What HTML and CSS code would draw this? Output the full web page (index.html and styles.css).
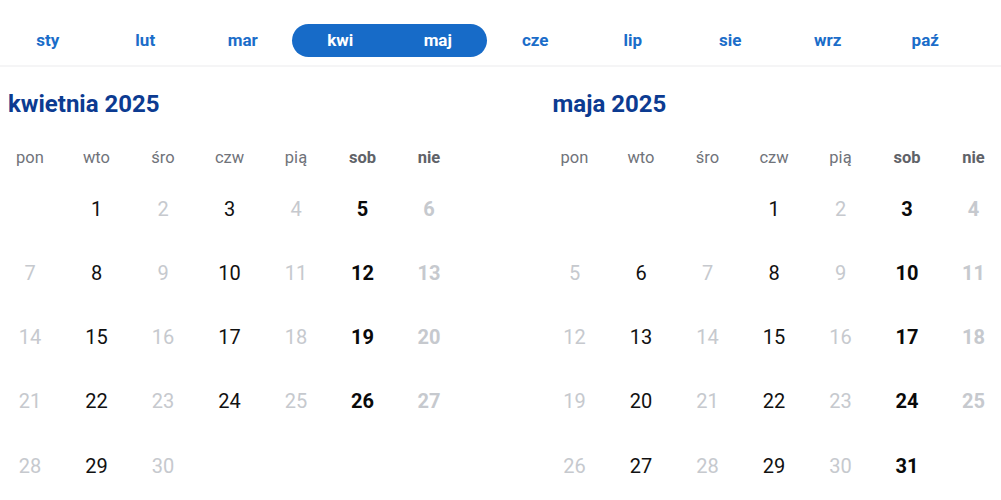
FILE: index.html
```html
<!DOCTYPE html>
<html lang="pl">
<head>
<meta charset="utf-8">
<title>Kalendarz</title>
<link rel="stylesheet" href="styles.css">
</head>
<body>
<nav class="months">
  <div class="month">sty</div>
  <div class="month">lut</div>
  <div class="month">mar</div>
  <div class="range">
    <div class="month sel">kwi</div>
    <div class="month sel">maj</div>
  </div>
  <div class="month">cze</div>
  <div class="month">lip</div>
  <div class="month">sie</div>
  <div class="month">wrz</div>
  <div class="month">paź</div>
</nav>
<main class="calendars">
  <section class="cal">
    <h2 class="title">kwietnia 2025</h2>
    <div class="grid">
      <div class="wd">pon</div><div class="wd">wto</div><div class="wd">śro</div><div class="wd">czw</div><div class="wd">pią</div><div class="wd we">sob</div><div class="wd we">nie</div>
      <div class="day"></div><div class="day d">1</div><div class="day m">2</div><div class="day d">3</div><div class="day m">4</div><div class="day s">5</div><div class="day u">6</div>
      <div class="day m">7</div><div class="day d">8</div><div class="day m">9</div><div class="day d">10</div><div class="day m">11</div><div class="day s">12</div><div class="day u">13</div>
      <div class="day m">14</div><div class="day d">15</div><div class="day m">16</div><div class="day d">17</div><div class="day m">18</div><div class="day s">19</div><div class="day u">20</div>
      <div class="day m">21</div><div class="day d">22</div><div class="day m">23</div><div class="day d">24</div><div class="day m">25</div><div class="day s">26</div><div class="day u">27</div>
      <div class="day m">28</div><div class="day d">29</div><div class="day m">30</div><div class="day"></div><div class="day"></div><div class="day"></div><div class="day"></div>
    </div>
  </section>
  <section class="cal">
    <h2 class="title">maja 2025</h2>
    <div class="grid">
      <div class="wd">pon</div><div class="wd">wto</div><div class="wd">śro</div><div class="wd">czw</div><div class="wd">pią</div><div class="wd we">sob</div><div class="wd we">nie</div>
      <div class="day"></div><div class="day"></div><div class="day"></div><div class="day d">1</div><div class="day m">2</div><div class="day s">3</div><div class="day u">4</div>
      <div class="day m">5</div><div class="day d">6</div><div class="day m">7</div><div class="day d">8</div><div class="day m">9</div><div class="day s">10</div><div class="day u">11</div>
      <div class="day m">12</div><div class="day d">13</div><div class="day m">14</div><div class="day d">15</div><div class="day m">16</div><div class="day s">17</div><div class="day u">18</div>
      <div class="day m">19</div><div class="day d">20</div><div class="day m">21</div><div class="day d">22</div><div class="day m">23</div><div class="day s">24</div><div class="day u">25</div>
      <div class="day m">26</div><div class="day d">27</div><div class="day m">28</div><div class="day d">29</div><div class="day m">30</div><div class="day s">31</div><div class="day"></div>
    </div>
  </section>
</main>
</body>
</html>
```
FILE: styles.css
```css
html, body {
  margin: 0;
  padding: 0;
  background: #ffffff;
}
body {
  font-family: Roboto, "Liberation Sans", Arial, sans-serif;
  width: 1001px;
  height: 500px;
  overflow: hidden;
}
.months {
  display: flex;
  align-items: center;
  height: 67px;
  padding-top: 15px;
  box-sizing: border-box;
  margin-left: -1px;
  border-bottom: 2px solid #f5f5f6;
  overflow: hidden;
  white-space: nowrap;
}
.range {
  display: flex;
  flex: none;
  background: #176bc8;
  border-radius: 17px;
  height: 33px;
}
.month {
  flex: none;
  width: 97.5px;
  height: 33px;
  line-height: 33px;
  text-align: center;
  font-size: 17px;
  font-weight: 700;
  color: #1b6dc9;
}
.month.sel {
  color: #ffffff;
}
.calendars {
  display: flex;
  gap: 101.5px;
  padding: 0 8px;
}
.cal {
  flex: none;
  width: 443px;
}
.title {
  margin: 22px 0 0;
  height: 30px;
  line-height: 30px;
  font-size: 24px;
  font-weight: 700;
  color: #0c3b91;
}
.grid {
  display: grid;
  grid-template-columns: repeat(7, 44px);
  column-gap: 22.5px;
  grid-template-rows: 39px repeat(5, 64.25px);
  margin-top: 18.5px;
}
.wd {
  display: flex;
  align-items: center;
  justify-content: center;
  font-size: 16.5px;
  color: #70737a;
}
.wd.we {
  font-weight: 700;
  color: #5f6268;
}
.day {
  display: flex;
  align-items: center;
  justify-content: center;
  font-size: 20px;
  color: #111111;
}
.day.m {
  color: #c6c9ce;
}
.day.s {
  font-weight: 700;
  color: #0a0a0a;
}
.day.u {
  font-weight: 700;
  color: #c6c9ce;
}
```
